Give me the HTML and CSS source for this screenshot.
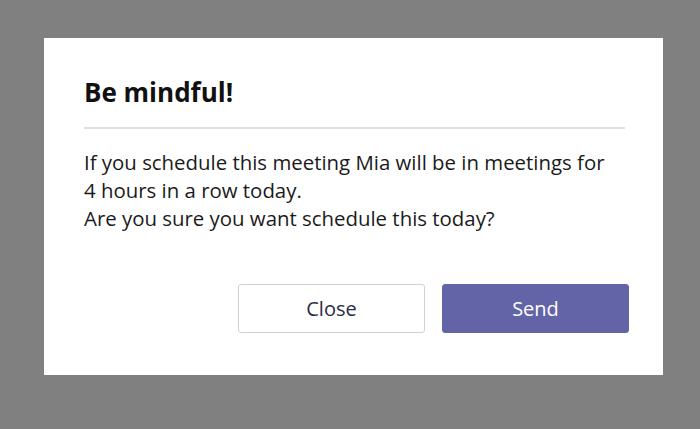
FILE: index.html
```html
<!DOCTYPE html>
<html>
<head>
<meta charset="utf-8">
<link rel="stylesheet" href="styles.css">
</head>
<body>
<div class="dialog">
  <h1 class="title">Be mindful!</h1>
  <hr class="divider">
  <p class="message">If you schedule this meeting Mia will be in meetings for<br>4 hours in a row today.<br>Are you sure you want schedule this today?</p>
  <div class="actions">
    <button class="btn btn-secondary">Close</button>
    <button class="btn btn-primary">Send</button>
  </div>
</div>
</body>
</html>
```
FILE: styles.css
```css
html, body {
  margin: 0;
  padding: 0;
}
body {
  background: #808080;
  width: 700px;
  height: 429px;
  overflow: hidden;
  font-family: "Open Sans", "Noto Sans", sans-serif;
  color: #1f1f1f;
  padding-top: 38px;
  padding-left: 44px;
  box-sizing: border-box;
}
.dialog {
  width: 619px;
  height: 337px;
  box-sizing: border-box;
  background: #ffffff;
  padding: 40px 34px 0 40px;
  display: flex;
  flex-direction: column;
}
.title {
  margin: 0;
  font-size: 26px;
  font-weight: 700;
  line-height: 29px;
  color: #111;
}
.divider {
  margin: 20px 4px 0 0;
  border: none;
  height: 2px;
  background: #e1e1e1;
}
.message {
  margin: 19px 0 0 0;
  font-size: 20.4px;
  line-height: 28px;
  color: #1a1a1a;
}
.actions {
  margin-top: 52px;
  display: flex;
  justify-content: flex-end;
  gap: 17px;
}
.btn {
  width: 187px;
  height: 49px;
  border-radius: 3px;
  font-family: "Open Sans", "Noto Sans", sans-serif;
  font-size: 20px;
  box-sizing: border-box;
  cursor: pointer;
}
.btn-secondary {
  background: #fff;
  border: 1px solid #d1d1d1;
  color: #2b2b45;
}
.btn-primary {
  background: #6264a7;
  border: 1px solid #6264a7;
  color: #fff;
}
```
